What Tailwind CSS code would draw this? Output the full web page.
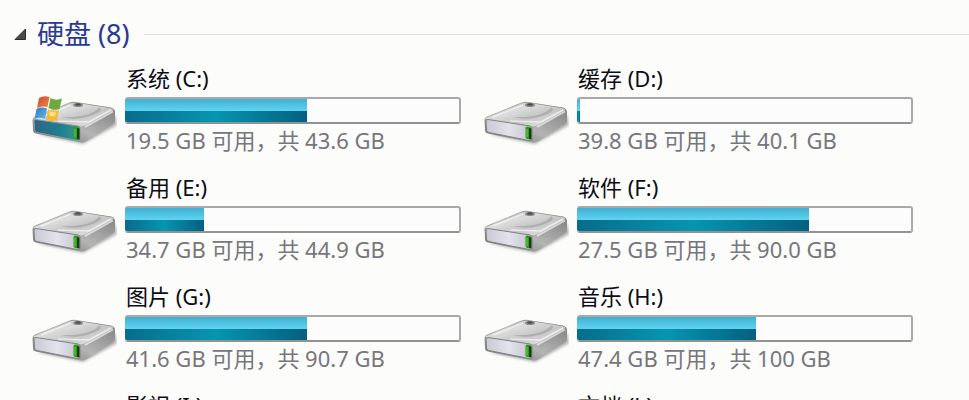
<!DOCTYPE html>
<html lang="zh-CN">
  <head>
    <meta charset="UTF-8" />
    <meta name="viewport" content="width=device-width, initial-scale=1.0" />
    <title>硬盘</title>
    <script src="https://cdn.jsdelivr.net/npm/@tailwindcss/browser@4"></script>
  </head>
  <body class="bg-[#fcfcfb] font-['Noto_Sans','Noto_Sans_CJK_SC',sans-serif]">
    <!-- shared drive artwork -->
    <svg class="absolute size-0" aria-hidden="true">
      <defs>
        <linearGradient id="top" x1="0" y1="0" x2="1" y2="1">
          <stop offset="0" stop-color="#a9a9a9" />
          <stop offset="0.35" stop-color="#dcdcdc" />
          <stop offset="0.6" stop-color="#c6c6c6" />
          <stop offset="1" stop-color="#ececec" />
        </linearGradient>
        <linearGradient id="side" x1="0" y1="1" x2="1" y2="0">
          <stop offset="0" stop-color="#686868" />
          <stop offset="0.45" stop-color="#b4b4b4" />
          <stop offset="1" stop-color="#7c7c7c" />
        </linearGradient>
        <linearGradient id="face" x1="0" y1="0" x2="1" y2="0">
          <stop offset="0" stop-color="#c9c9d4" />
          <stop offset="0.5" stop-color="#e3e3ee" />
          <stop offset="1" stop-color="#c3c3cc" />
        </linearGradient>
        <linearGradient id="teal" x1="0" y1="0" x2="1" y2="0">
          <stop offset="0" stop-color="#2f6583" />
          <stop offset="0.6" stop-color="#1f7f90" />
          <stop offset="1" stop-color="#3b9a8c" />
        </linearGradient>
        <linearGradient id="red" x1="0" y1="0" x2="1" y2="1">
          <stop offset="0" stop-color="#c8482a" />
          <stop offset="1" stop-color="#f08a4c" />
        </linearGradient>
        <linearGradient id="blue" x1="0" y1="0" x2="1" y2="1">
          <stop offset="0" stop-color="#2f74bd" />
          <stop offset="1" stop-color="#62bdec" />
        </linearGradient>
        <filter id="soft" x="-20%" y="-40%" width="140%" height="180%">
          <feGaussianBlur stdDeviation="1.5" />
        </filter>
        <g id="shell">
          <path d="M5 39 L52 49 L86 30 L84 20 L50 36z" fill="#000" opacity="0.3" filter="url(#soft)" />
          <path d="M1.500 25 Q1.500 22.500 4 21.500 L38 7.800 Q41 6.500 45 7 L80 12.500 Q84 13.500 84 17 L84 26 Q84 28 82 29.200 L56 46 Q53 48 49 47.300 L5 38.500 Q2 38 2 35z" fill="url(#side)" />
          <path d="M3 23 L38 8.500 Q41 7.300 45 7.800 L80 13.200 Q84 14.200 81 16 L55 30 Q51 32 47 31 L4 25 Q2 24 3 23z" fill="url(#top)" />
          <path d="M30 22 Q50 27 68 17 Q72 14 68 12.500 Q60 23 30 22z" fill="#999" opacity="0.55" />
          <path d="M10 22 L40 10 M27 26 L58 27 L80 15" fill="none" stroke="#fff" stroke-width="1.500" opacity="0.6" />
          <path d="M54 32 L82 16.500" stroke="#f5f5f5" stroke-width="2" opacity="0.7" />
          <ellipse cx="47" cy="10" rx="5" ry="2" fill="#8c8c8c" />
          <ellipse cx="47" cy="9.500" rx="3" ry="1.200" fill="#4f4f4f" />
        </g>
        <g id="led">
          <path d="M42.500 33 Q42.500 31.500 44 31.500 L47.500 32 L47.500 44.500 L44 44 Q42.500 43.500 42.500 42z" fill="#2f9c1c" />
          <path d="M44 34 L44 42" stroke="#6ccb45" />
          <path d="M46 33 L48.500 33.500 L48.500 44.500 L46 44z" fill="#123d0c" />
        </g>
        <symbol id="drive" viewBox="0 0 86 52">
          <use href="#shell" />
          <path d="M3 26 Q3 24.300 5 24.500 L47 31 Q49 31.500 49 33 L49 44 Q49 46 47 45.700 L6 37.500 Q3.500 37 3.500 35z" fill="url(#face)" stroke="#828282" />
          <use href="#led" />
        </symbol>
        <symbol id="system" viewBox="0 0 86 52">
          <use href="#shell" />
          <path d="M3 26 Q3 24.300 5 24.500 L47 31 Q49 31.500 49 33 L49 44 Q49 46 47 45.700 L6 37.500 Q3.500 37 3.500 35z" fill="url(#teal)" stroke="#8b9aa2" />
          <use href="#led" />
          <path d="M8 3 Q13 0 18.500 2 L16.500 12 Q11 10.500 6 13z" fill="url(#red)" />
          <path d="M19.500 3 Q25 6 31 3.500 L28.500 14 Q23 16 17.500 13z" fill="#6fa83f" />
          <path d="M5.500 14 Q11 11.500 16 13.500 L14 24 Q9 21.500 3.500 24z" fill="url(#blue)" />
          <path d="M17 14.500 Q22 17 28 15 L26 25 Q20 27.500 15 24.500z" fill="#f4bb33" />
          <path d="M19 16 Q22 18 25 17.500 L24 21 Q20 22 18 20z" fill="#ffe48a" />
        </symbol>
      </defs>
    </svg>

    <main class="h-screen overflow-hidden pt-3">
      <div class="flex items-center gap-[14px]">
        <h2 class="shrink-0">
          <button type="button" aria-expanded="true" class="flex items-center gap-[10px] pl-[14px] text-[27px] leading-[44px] text-[#283a94]">
            <svg class="size-[13px]" viewBox="0 0 13 13" aria-hidden="true">
              <path d="M11.500 1 L11.500 11.500 L1 11.500z" fill="#4a4a4a" stroke="#2c2c2c" />
            </svg>
            硬盘 (8)
          </button>
        </h2>
        <div class="h-px flex-1 bg-[#dfdfe1]"></div>
      </div>
      <ul id="drives" class="mt-2 grid grid-cols-2 gap-x-[22px] gap-y-[18px] pr-14 pl-[31px]"></ul>
    </main>

    <script>
      const drives = [
        { name: "系统 (C:)", free: "19.5 GB", total: "43.6 GB", used: 54, icon: "system" },
        { name: "缓存 (D:)", free: "39.8 GB", total: "40.1 GB", used: 0, icon: "drive" },
        { name: "备用 (E:)", free: "34.7 GB", total: "44.9 GB", used: 23, icon: "drive" },
        { name: "软件 (F:)", free: "27.5 GB", total: "90.0 GB", used: 69, icon: "drive" },
        { name: "图片 (G:)", free: "41.6 GB", total: "90.7 GB", used: 54, icon: "drive" },
        { name: "音乐 (H:)", free: "47.4 GB", total: "100 GB", used: 53, icon: "drive" },
        { name: "影视 (I:)" },
        { name: "文档 (J:)" },
      ];

      const list = document.getElementById("drives");
      drives.forEach((d) => {
        let icon = "";
        let usage = "";
        if (d.icon) {
          icon = `<svg class="mt-[31px] h-[52px] w-full" aria-hidden="true"><use href="#${d.icon}" /></svg>`;
          usage = `
            <div role="meter" aria-label="${d.name}" aria-valuemin="0" aria-valuemax="100" aria-valuenow="${d.used}"
              class="mt-[5px] mb-[2px] h-[27px] rounded-[3px] border-2 border-[#a9a9a9] border-b-[#929292] bg-[#fcfcfc]">
              <div class="-ml-[2px] h-full rounded-l-[2px] bg-linear-to-b from-[#3fb0d2] from-0% to-[#5fd2f0] to-50%" style="width: calc(${d.used}% + 3px)">
                <div class="h-1/2"></div>
                <div class="h-1/2 rounded-bl-[2px] bg-linear-to-r from-[#086c8c] via-[#0795b0] to-[#056080]"></div>
              </div>
            </div>
            <p class="pl-px text-[22px] leading-7 whitespace-nowrap text-[#76767c]">${d.free} 可用，共 ${d.total}</p>`;
        }
        list.innerHTML += `
          <li class="flex gap-2 pb-px">
            <div class="w-[86px] shrink-0">${icon}</div>
            <div class="min-w-0 flex-1">
              <h3 class="pl-px text-[22px] leading-7 text-[#0c0c14]">${d.name}</h3>
              ${usage}
            </div>
          </li>`;
      });
    </script>
  </body>
</html>
